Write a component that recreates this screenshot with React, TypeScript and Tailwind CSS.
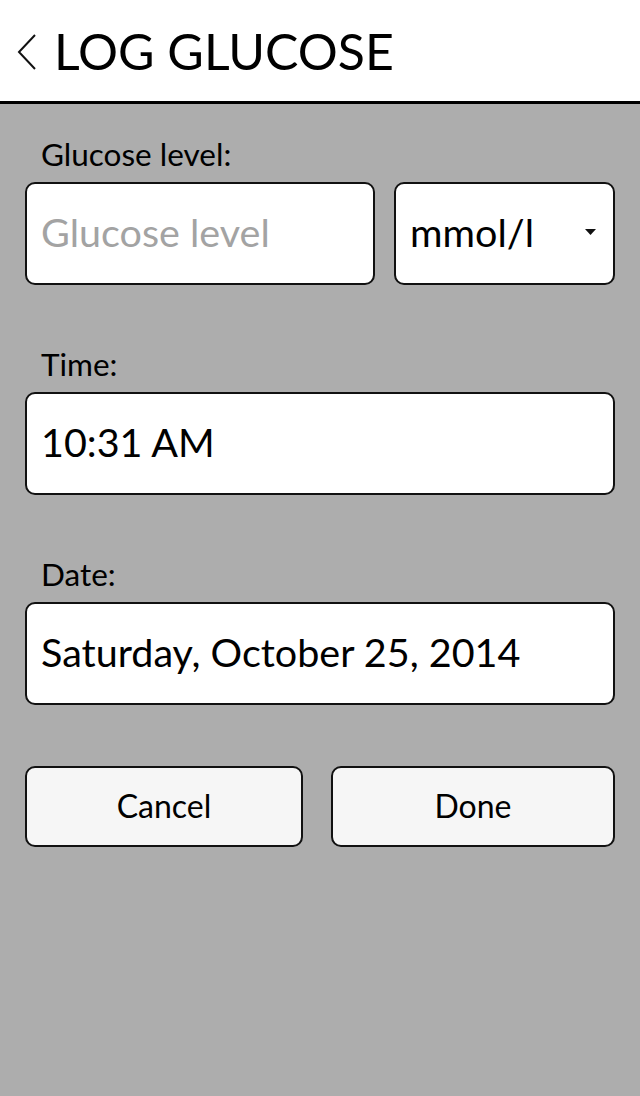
export default function App() {
  return (
    <div className="min-h-[1096px] w-[640px] bg-[#adadad] font-['Lato','Liberation_Sans',sans-serif] text-black">
      {/* header */}
      <header className="flex h-[104px] items-center border-b-[3px] border-black bg-white pl-[16px]">
        <svg width="22" height="38" viewBox="0 0 22 38" className="mr-[16px] mt-[2px]">
          <path d="M19 2 L3 19 L19 36" fill="none" stroke="#111" strokeWidth="2" />
        </svg>
        <h1 className="text-[50px] leading-none">LOG GLUCOSE</h1>
      </header>

      <main className="px-[25px] pt-[33px]">
        <label className="block pl-[16px] text-[31.5px] leading-[34px]">Glucose level:</label>
        <div className="mt-[11px] flex gap-[19px]">
          <div className="flex h-[103px] w-[352px] items-center rounded-[10px] border-2 border-[#111] bg-white px-[14px] pb-[3px]">
            <span className="text-[39.5px] text-[#a3a3a3]">Glucose level</span>
          </div>
          <div className="flex h-[103px] w-[222px] items-center justify-between rounded-[10px] border-2 border-[#111] bg-white pl-[14px] pr-[17px] pb-[3px]">
            <span className="text-[39.5px]">mmol/l</span>
            <svg width="11" height="6" viewBox="0 0 11 6">
              <path d="M0 0 H11 L5.5 6 Z" fill="#111" />
            </svg>
          </div>
        </div>

        <label className="mt-[62px] block pl-[16px] text-[31.5px] leading-[34px]">Time:</label>
        <div className="mt-[11px] flex h-[103px] items-center rounded-[10px] border-2 border-[#111] bg-white px-[14px] pb-[3px]">
          <span className="text-[39.5px]">10:31 AM</span>
        </div>

        <label className="mt-[62px] block pl-[16px] text-[31.5px] leading-[34px]">Date:</label>
        <div className="mt-[11px] flex h-[103px] items-center rounded-[10px] border-2 border-[#111] bg-white px-[14px] pb-[3px]">
          <span className="text-[39.5px]">Saturday, October 25, 2014</span>
        </div>

        <div className="mt-[61px] flex gap-[28px]">
          <button className="h-[81px] w-[278px] rounded-[10px] border-2 border-[#111] bg-[#f6f6f6] pb-[2px] text-[32px]">
            Cancel
          </button>
          <button className="h-[81px] w-[284px] rounded-[10px] border-2 border-[#111] bg-[#f6f6f6] pb-[2px] text-[32px]">
            Done
          </button>
        </div>
      </main>
    </div>
  );
}
